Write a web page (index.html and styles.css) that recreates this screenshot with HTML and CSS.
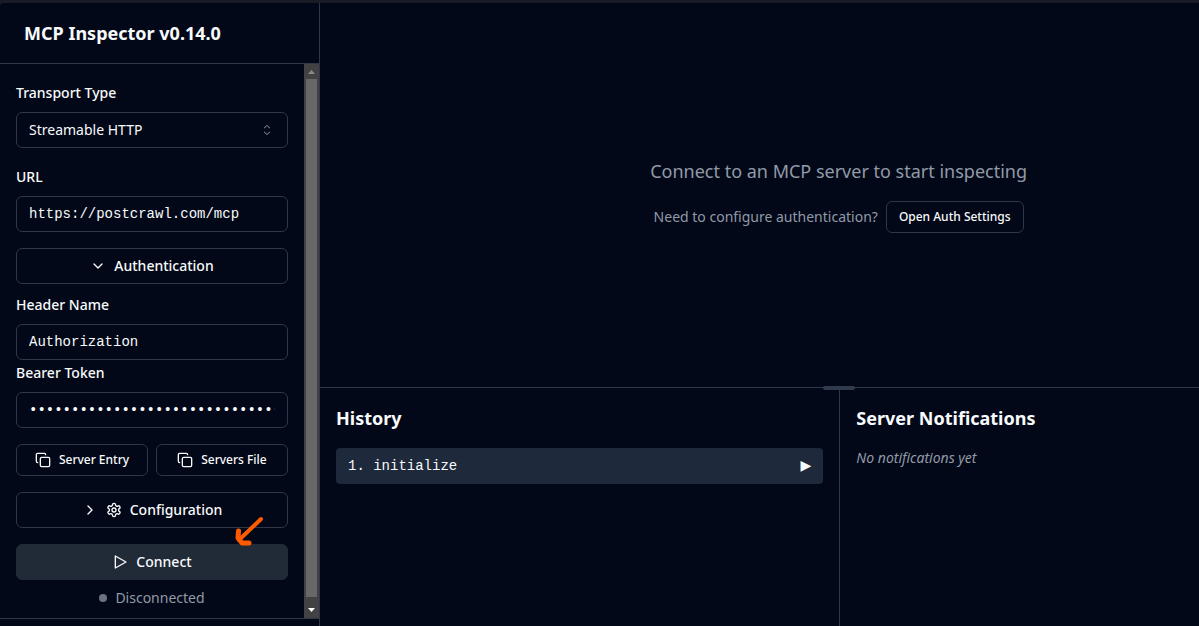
FILE: index.html
```
<!DOCTYPE html>
<html lang="en">
<head>
<meta charset="utf-8">
<meta name="viewport" content="width=device-width, initial-scale=1">
<title>MCP Inspector</title>
<link rel="stylesheet" href="styles.css">
</head>
<body>
<div class="app">
  <aside class="sidebar">
    <header class="sidebar-header"><h1 class="title">MCP Inspector v0.14.0</h1></header>
    <div class="sidebar-body">
      <form class="form">
        <div class="field">
          <label class="label" for="transport">Transport Type</label>
          <div class="select-wrap">
            <select class="control select" id="transport"><option>Streamable HTTP</option></select>
            <svg class="select-icon" viewBox="0 0 16 16" aria-hidden="true"><path d="M5 6.2 8 3.500l3 2.700M5 9.800l3 2.700 3-2.700"/></svg>
          </div>
        </div>
        <div class="field field-url">
          <label class="label" for="url">URL</label>
          <input class="control mono" id="url" type="text" value="https://postcrawl.com/mcp">
        </div>
        <button class="button block" type="button">
          <svg class="icon" viewBox="0 0 24 24" aria-hidden="true"><path d="m6 9 6 6 6-6"/></svg>
          Authentication
        </button>
        <div class="field field-header">
          <label class="label" for="header-name">Header Name</label>
          <input class="control mono" id="header-name" type="text" value="Authorization">
        </div>
        <div class="field field-token">
          <label class="label" for="token">Bearer Token</label>
          <input class="control mono" id="token" type="password" value="0123456789012345678901234567890123456789">
        </div>
        <div class="pair">
          <button class="button small" type="button">
            <svg class="icon" viewBox="0 0 24 24" aria-hidden="true"><rect x="8" y="8" width="14" height="14" rx="2"/><path d="M4 16c-1.1 0-2-.9-2-2V4c0-1.1.9-2 2-2h10c1.1 0 2 .9 2 2"/></svg>
            Server Entry
          </button>
          <button class="button small" type="button">
            <svg class="icon" viewBox="0 0 24 24" aria-hidden="true"><rect x="8" y="8" width="14" height="14" rx="2"/><path d="M4 16c-1.1 0-2-.9-2-2V4c0-1.1.9-2 2-2h10c1.1 0 2 .9 2 2"/></svg>
            Servers File
          </button>
        </div>
        <button class="button block" type="button">
          <svg class="icon" viewBox="0 0 24 24" aria-hidden="true"><path d="m9 18 6-6-6-6"/></svg>
          <svg class="icon" viewBox="0 0 24 24" aria-hidden="true"><path d="M12.22 2h-.44a2 2 0 0 0-2 2v.18a2 2 0 0 1-1 1.73l-.43.25a2 2 0 0 1-2 0l-.15-.08a2 2 0 0 0-2.73.73l-.22.38a2 2 0 0 0 .73 2.73l.15.1a2 2 0 0 1 1 1.72v.51a2 2 0 0 1-1 1.74l-.15.09a2 2 0 0 0-.73 2.73l.22.38a2 2 0 0 0 2.73.73l.15-.08a2 2 0 0 1 2 0l.43.25a2 2 0 0 1 1 1.73V20a2 2 0 0 0 2 2h.44a2 2 0 0 0 2-2v-.18a2 2 0 0 1 1-1.73l.43-.25a2 2 0 0 1 2 0l.15.08a2 2 0 0 0 2.73-.73l.22-.39a2 2 0 0 0-.73-2.73l-.15-.08a2 2 0 0 1-1-1.74v-.5a2 2 0 0 1 1-1.74l.15-.09a2 2 0 0 0 .73-2.73l-.22-.38a2 2 0 0 0-2.73-.73l-.15.08a2 2 0 0 1-2 0l-.43-.25a2 2 0 0 1-1-1.73V4a2 2 0 0 0-2-2z"/><circle cx="12" cy="12" r="3"/></svg>
          Configuration
        </button>
        <div class="connect-row">
          <button class="button block primary" type="button">
            <svg class="icon" viewBox="0 0 24 24" aria-hidden="true"><path d="m5 3 16 9-16 9z"/></svg>
            Connect
          </button>
          <svg class="pointer" viewBox="0 0 32 32" aria-hidden="true"><path d="M28 4 6 25"/><path class="pointer-head" d="M5.500 16 5 23l4 5h7"/></svg>
        </div>
        <p class="status"><span class="dot"></span>Disconnected</p>
      </form>
      <div class="scrollbar" aria-hidden="true">
        <svg class="scroll-arrow dim" viewBox="0 0 15 15"><path d="M7.500 6 11 10H4z"/></svg>
        <div class="thumb"></div>
        <svg class="scroll-arrow" viewBox="0 0 15 15"><path d="M4 5h7l-3.500 4z"/></svg>
      </div>
    </div>
    <footer class="sidebar-footer"></footer>
  </aside>
  <main class="main">
    <section class="welcome">
      <p class="lead">Connect to an MCP server to start inspecting</p>
      <div class="auth-row">
        <p class="hint">Need to configure authentication?</p>
        <button class="button small fit" type="button">Open Auth Settings</button>
      </div>
    </section>
    <div class="panels">
      <div class="drag-handle"></div>
      <section class="panel history">
        <h2 class="title">History</h2>
        <ul class="list">
          <li><button class="entry" type="button"><span>1. initialize</span><span>▶</span></button></li>
        </ul>
      </section>
      <section class="panel notifications">
        <h2 class="title">Server Notifications</h2>
        <p class="empty">No notifications yet</p>
      </section>
    </div>
  </main>
</div>
</body>
</html>
```
FILE: styles.css
```
:root {
  --bg: #020817;
  --border: #2d3748;
  --text: #f8fafc;
  --muted: #919aa8;
}

* { box-sizing: border-box; }

body {
  margin: 0;
  background: #1b1b26;
  color: var(--text);
  font: 14px/20px "Noto Sans", sans-serif;
}

h1, h2, p, ul { margin: 0; padding: 0; }
ul { list-style: none; }
button, input, select { font: inherit; color: inherit; }

.app {
  display: flex;
  height: 100vh;
  border-top: 3px solid #1b1b26;
  overflow: hidden;
}

.sidebar {
  display: flex;
  flex-direction: column;
  flex: 0 0 320px;
  background: var(--bg);
  border-right: 1px solid var(--border);
  border-top-left-radius: 4px;
}

.sidebar-header {
  padding: 16px 24px;
  border-bottom: 1px solid var(--border);
}

.title {
  font-size: 18px;
  line-height: 28px;
  font-weight: 700;
}

.sidebar-body {
  display: flex;
  flex: 1;
  min-height: 0;
}

.form { flex: 1; padding: 20px 16px 0; overflow: hidden; }

.field { display: flex; flex-direction: column; gap: 10px; }
.field-url { margin: 20px 0 16px; }
.field-header { margin-top: 12px; }
.field-token { margin-top: 4px; }

.label { font-weight: 500; line-height: 18px; }

.control {
  width: 100%;
  height: 36px;
  padding: 0 12px;
  background: transparent;
  border: 1px solid var(--border);
  border-radius: 6px;
}

.mono { font-family: "Liberation Mono", monospace; }

.select-wrap { position: relative; }
.select { display: block; appearance: none; }
.select-icon {
  position: absolute;
  right: 13px;
  top: 10px;
  width: 16px;
  height: 16px;
  fill: none;
  stroke: #8b93a1;
  pointer-events: none;
}

.button {
  display: flex;
  align-items: center;
  justify-content: center;
  gap: 8px;
  height: 36px;
  padding: 0 12px;
  background: transparent;
  border: 1px solid var(--border);
  border-radius: 6px;
  font-weight: 500;
}

.block { width: 100%; }
.small { height: 32px; font-size: 12px; }
.primary { background: #212a37; border-color: #212a37; }

.icon {
  width: 16px;
  height: 16px;
  fill: none;
  stroke: currentColor;
  stroke-width: 2;
  stroke-linecap: round;
  stroke-linejoin: round;
}

.pair {
  display: grid;
  grid-template-columns: 1fr 1fr;
  gap: 8px;
  margin: 16px 0;
}

.connect-row { position: relative; margin-top: 16px; }

.pointer {
  position: absolute;
  right: 23px;
  top: -29px;
  width: 32px;
  height: 32px;
  fill: none;
  stroke: #ff5a00;
  stroke-width: 4;
  stroke-linecap: round;
  stroke-linejoin: round;
}
.pointer-head { stroke-width: 5; }

.status {
  display: flex;
  align-items: center;
  justify-content: center;
  gap: 8px;
  margin-top: 8px;
  color: var(--muted);
}

.dot { width: 8px; height: 8px; border-radius: 50%; background: #6b7280; }

.scrollbar {
  display: flex;
  flex-direction: column;
  width: 15px;
  background: #424242;
}
.scroll-arrow { width: 15px; height: 15px; fill: #fff; }
.scroll-arrow.dim { fill: #8b8b8b; }
.thumb { flex: 1; margin: 0 2px 6px; background: #686868; }

.sidebar-footer { height: 8px; border-top: 1px solid var(--border); }

.main {
  display: flex;
  flex-direction: column;
  flex: 1;
  min-width: 0;
  background: var(--bg);
}

.welcome {
  display: flex;
  flex-direction: column;
  align-items: center;
  justify-content: center;
  gap: 16px;
  flex: 1;
  padding-left: 18%;
  color: var(--muted);
}

.lead { font-size: 18px; line-height: 28px; }
.auth-row { display: flex; align-items: center; gap: 8px; }
.fit { color: var(--text); }

.panels {
  position: relative;
  display: grid;
  grid-template-columns: 59.2% 1fr;
  flex: 0 0 239px;
  border-top: 1px solid var(--border);
}

.drag-handle {
  position: absolute;
  left: 59%;
  top: -2px;
  width: 32px;
  height: 4px;
  margin-left: -16px;
  border-radius: 2px;
  background: #2f3b4c;
}

.panel {
  display: flex;
  flex-direction: column;
  gap: 16px;
  min-width: 0;
  padding: 16px;
}
.history { border-right: 1px solid var(--border); }

.entry {
  display: flex;
  align-items: center;
  justify-content: space-between;
  width: 100%;
  height: 36px;
  padding: 0 12px;
  background: #1e293b;
  border: 0;
  border-radius: 4px;
  font-family: "Liberation Mono", "DejaVu Sans", monospace;
}

.empty { color: var(--muted); font-style: italic; }
```
